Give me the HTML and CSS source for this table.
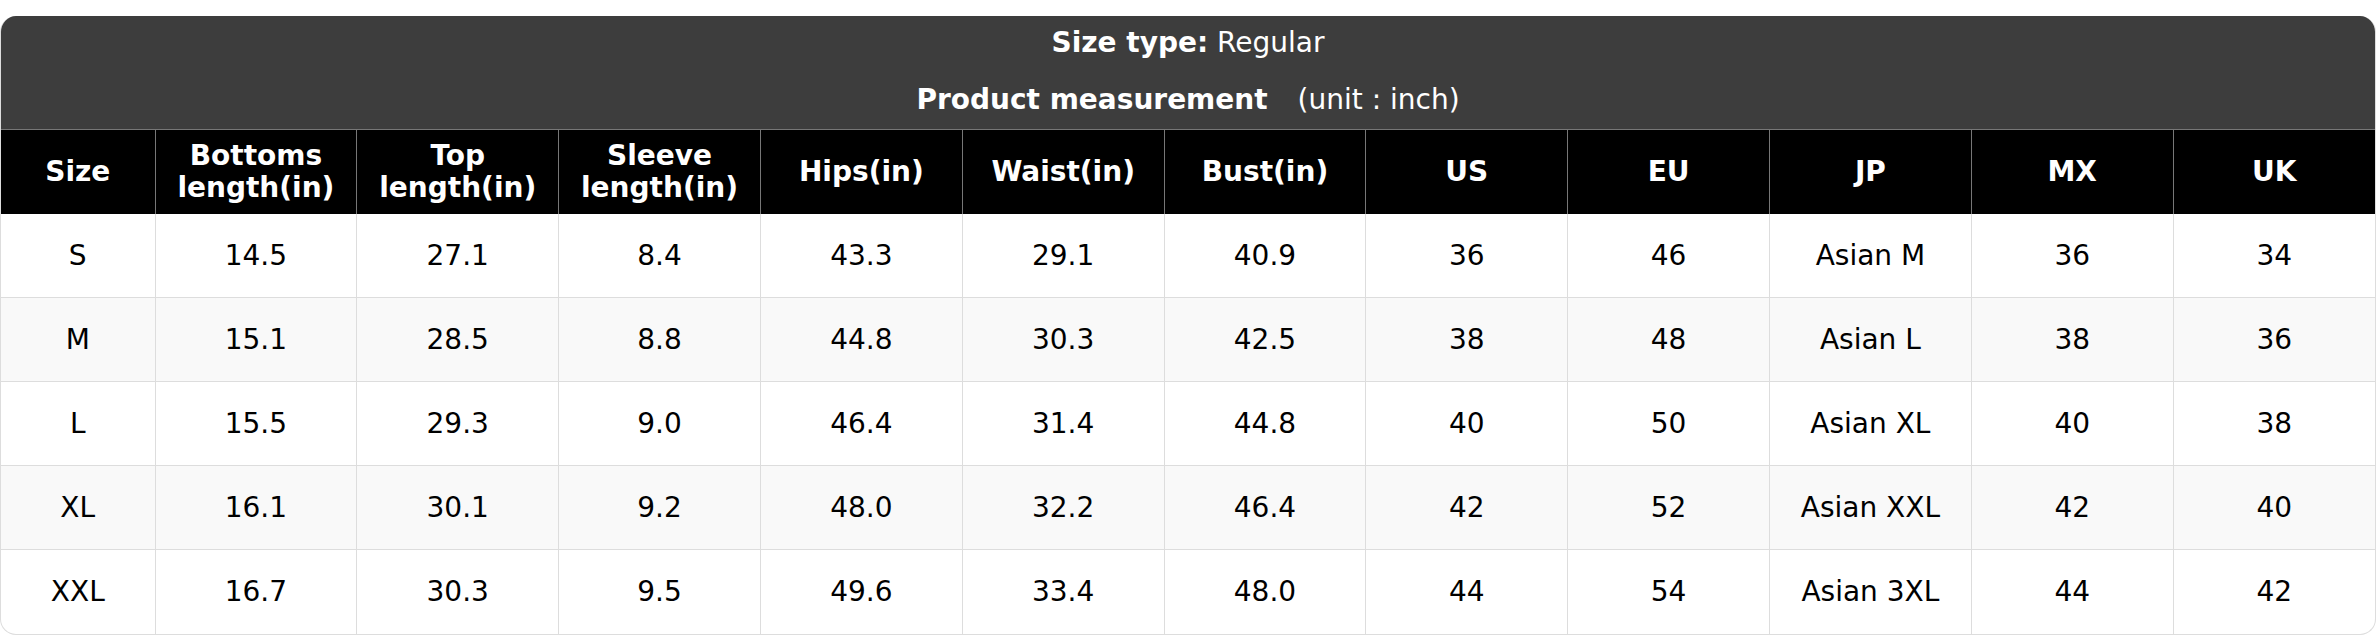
FILE: index.html
```html
<!DOCTYPE html>
<html>
<head>
<meta charset="utf-8">
<link rel="stylesheet" href="styles.css">
</head>
<body>
<div class="page">
  <div class="chart">
    <div class="chart-head">
      <div class="head-line head-line-1"><span class="strong">Size type:</span> Regular</div>
      <div class="head-line head-line-2"><span class="strong">Product measurement</span><span class="unit">(unit : inch)</span></div>
    </div>
    <table class="size-table">
      <colgroup>
        <col class="col-size">
        <col span="11">
      </colgroup>
      <thead>
        <tr>
          <th>Size</th>
          <th>Bottoms<br>length(in)</th>
          <th>Top<br>length(in)</th>
          <th>Sleeve<br>length(in)</th>
          <th>Hips(in)</th>
          <th>Waist(in)</th>
          <th>Bust(in)</th>
          <th>US</th>
          <th>EU</th>
          <th>JP</th>
          <th>MX</th>
          <th>UK</th>
        </tr>
      </thead>
      <tbody>
        <tr><td>S</td><td>14.5</td><td>27.1</td><td>8.4</td><td>43.3</td><td>29.1</td><td>40.9</td><td>36</td><td>46</td><td>Asian M</td><td>36</td><td>34</td></tr>
        <tr><td>M</td><td>15.1</td><td>28.5</td><td>8.8</td><td>44.8</td><td>30.3</td><td>42.5</td><td>38</td><td>48</td><td>Asian L</td><td>38</td><td>36</td></tr>
        <tr><td>L</td><td>15.5</td><td>29.3</td><td>9.0</td><td>46.4</td><td>31.4</td><td>44.8</td><td>40</td><td>50</td><td>Asian XL</td><td>40</td><td>38</td></tr>
        <tr><td>XL</td><td>16.1</td><td>30.1</td><td>9.2</td><td>48.0</td><td>32.2</td><td>46.4</td><td>42</td><td>52</td><td>Asian XXL</td><td>42</td><td>40</td></tr>
        <tr><td>XXL</td><td>16.7</td><td>30.3</td><td>9.5</td><td>49.6</td><td>33.4</td><td>48.0</td><td>44</td><td>54</td><td>Asian 3XL</td><td>44</td><td>42</td></tr>
      </tbody>
    </table>
  </div>
</div>
</body>
</html>
```
FILE: styles.css
```css
html, body {
  margin: 0;
  padding: 0;
  background: #ffffff;
}

body {
  font-family: "DejaVu Sans", Verdana, sans-serif;
  font-size: 28px;
  color: #000000;
}

.page {
  padding-top: 16px;
}

.chart {
  border: 1px solid #dddddd;
  border-top: none;
  border-radius: 16px;
  overflow: hidden;
  background: #ffffff;
}

.chart-head {
  background: #3d3d3d;
  color: #ffffff;
  text-align: center;
}

.head-line-1 {
  line-height: 54px;
}

.head-line-2 {
  line-height: 54px;
  padding-top: 3px;
  padding-bottom: 2px;
}

.strong {
  font-weight: bold;
}

.unit {
  margin-left: 30px;
}

.size-table {
  width: 100%;
  border-collapse: collapse;
  table-layout: fixed;
}

.col-size {
  width: 154px;
}

.size-table tr {
  height: 84px;
}

.size-table th {
  background: #000000;
  color: #ffffff;
  font-weight: bold;
  line-height: 32px;
  padding: 0 4px;
  border: 1px solid #777777;
  border-bottom: none;
  text-align: center;
  vertical-align: middle;
}

.size-table th:first-child,
.size-table td:first-child {
  border-left: none;
}

.size-table th:last-child,
.size-table td:last-child {
  border-right: none;
}

.size-table td {
  padding: 0 4px;
  border: 1px solid #dddddd;
  border-top: none;
  text-align: center;
  vertical-align: middle;
}

.size-table tbody tr:last-child td {
  border-bottom: none;
}

.size-table tbody tr:nth-child(even) td {
  background: #f9f9f9;
}
```
